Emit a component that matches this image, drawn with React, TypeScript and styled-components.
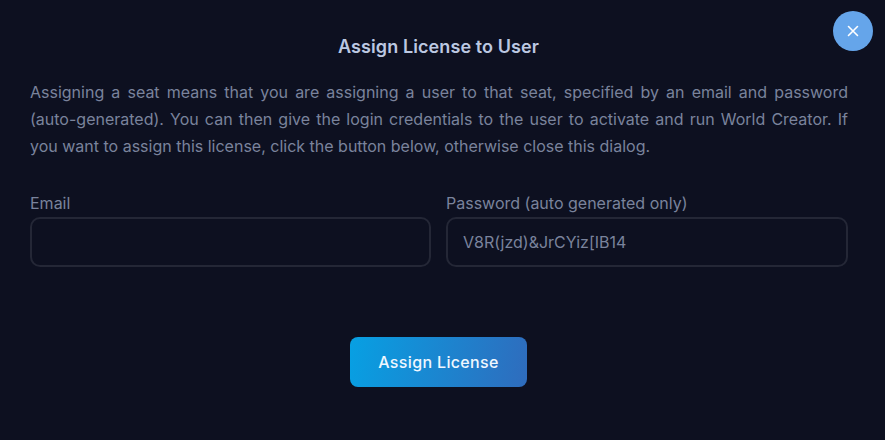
import React from 'react'
import styled, { createGlobalStyle } from 'styled-components'

const GlobalStyle = createGlobalStyle`
  html, body {
    margin: 0;
    padding: 0;
    background: #0d1020;
    font-family: 'Inter', sans-serif;
  }
`

const CloseIcon = () => (
  <svg width="12" height="12" viewBox="0 0 12 12" fill="none">
    <path d="M1.5 1.5L10.5 10.5M10.5 1.5L1.5 10.5" stroke="#fff" strokeWidth="1.6" strokeLinecap="round" />
  </svg>
)

export default function App() {
  return (
    <>
      <GlobalStyle />
      <Dialog>
        <CloseButton aria-label="Close">
          <CloseIcon />
        </CloseButton>
        <Title>Assign License to User</Title>
        <Description>
          Assigning a seat means that you are assigning a user to that seat, specified by an email and password
          (auto-generated). You can then give the login credentials to the user to activate and run World Creator. If
          you want to assign this license, click the button below, otherwise close this dialog.
        </Description>
        <Fields>
          <Field>
            <Label>Email</Label>
            <Input type="text" />
          </Field>
          <Field>
            <Label>Password (auto generated only)</Label>
            <Input type="text" defaultValue="V8R(jzd)&JrCYiz[IB14" readOnly />
          </Field>
        </Fields>
        <Actions>
          <AssignButton>Assign License</AssignButton>
        </Actions>
      </Dialog>
    </>
  )
}

const Dialog = styled.div`
  position: relative;
  box-sizing: border-box;
  width: 885px;
  height: 440px;
  padding: 36px 37px 0 30px;
  background: #0d1020;
  overflow: hidden;
`

const CloseButton = styled.button`
  position: absolute;
  top: 11px;
  right: 12px;
  display: flex;
  align-items: center;
  justify-content: center;
  width: 40px;
  height: 40px;
  padding: 0;
  border: none;
  border-radius: 50%;
  background: #65a5ea;
`

const Title = styled.h2`
  margin: 0 1px 21px 0;
  font-size: 18px;
  font-weight: 600;
  line-height: 22px;
  letter-spacing: 0.1px;
  text-align: center;
  color: #bcc8e2;
`

const Description = styled.p`
  margin: 0 0 33px;
  font-size: 16px;
  line-height: 27px;
  text-align: justify;
  color: #7a839c;
`

const Fields = styled.div`
  display: grid;
  grid-template-columns: 401px 402px;
  gap: 15px;
`

const Field = styled.div`
  display: flex;
  flex-direction: column;
  gap: 4px;
`

const Label = styled.label`
  font-size: 16px;
  line-height: 20px;
  color: #7a839c;
`

const Input = styled.input`
  box-sizing: border-box;
  width: 100%;
  height: 50px;
  padding: 0 15px;
  border: 2px solid #242736;
  border-radius: 10px;
  outline: none;
  background: transparent;
  font-family: 'Inter', sans-serif;
  font-size: 16px;
  color: #7a839c;
`

const Actions = styled.div`
  display: flex;
  justify-content: center;
  margin: 70px 1px 0 0;
`

const AssignButton = styled.button`
  width: 177px;
  height: 50px;
  border: none;
  border-radius: 8px;
  background: linear-gradient(100deg, #07a0e3, #2f6cbd);
  font-family: 'Inter', sans-serif;
  font-size: 16px;
  font-weight: 500;
  letter-spacing: 0.35px;
  color: #f0f7ff;
`
